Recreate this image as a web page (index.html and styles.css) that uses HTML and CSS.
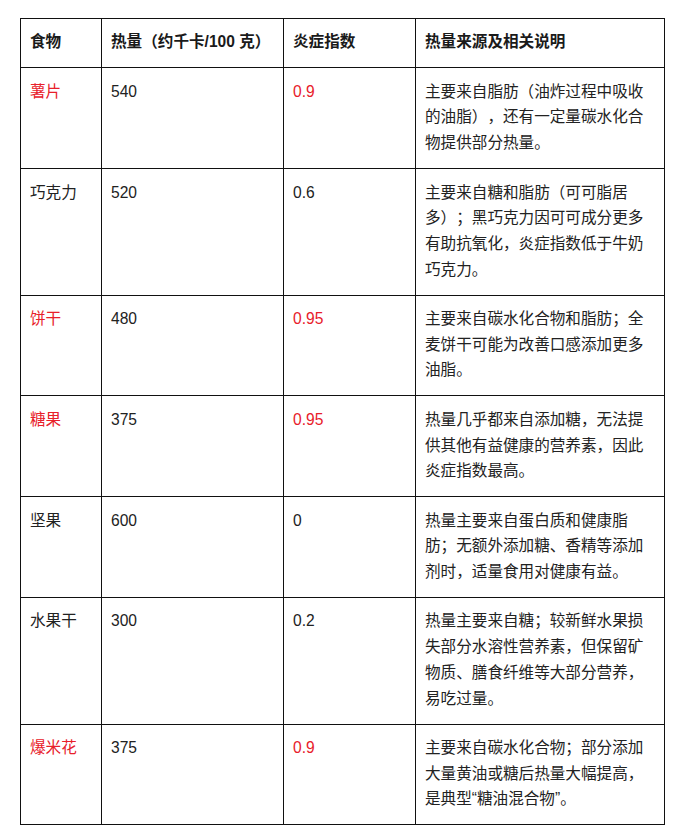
FILE: index.html
```html
<!DOCTYPE html>
<html lang="zh-CN">
<head>
<meta charset="utf-8">
<link rel="stylesheet" href="styles.css">
</head>
<body>
<div class="page">
<table class="food">
<colgroup><col class="c1"><col class="c2"><col class="c3"><col class="c4"></colgroup>
<thead>
<tr><th>食物</th><th>热量（约千卡/100 克）</th><th>炎症指数</th><th>热量来源及相关说明</th></tr>
</thead>
<tbody>
<tr><td class="red">薯片</td><td>540</td><td class="red">0.9</td><td>主要来自脂肪（油炸过程中吸收的油脂），还有一定量碳水化合物提供部分热量。</td></tr>
<tr><td>巧克力</td><td>520</td><td>0.6</td><td>主要来自糖和脂肪（可可脂居多）；黑巧克力因可可成分更多有助抗氧化，炎症指数低于牛奶巧克力。</td></tr>
<tr><td class="red">饼干</td><td>480</td><td class="red">0.95</td><td>主要来自碳水化合物和脂肪；全麦饼干可能为改善口感添加更多油脂。</td></tr>
<tr><td class="red">糖果</td><td>375</td><td class="red">0.95</td><td>热量几乎都来自添加糖，无法提供其他有益健康的营养素，因此炎症指数最高。</td></tr>
<tr><td>坚果</td><td>600</td><td>0</td><td>热量主要来自蛋白质和健康脂肪；无额外添加糖、香精等添加剂时，适量食用对健康有益。</td></tr>
<tr><td>水果干</td><td>300</td><td>0.2</td><td>热量主要来自糖；较新鲜水果损失部分水溶性营养素，但保留矿物质、膳食纤维等大部分营养，易吃过量。</td></tr>
<tr><td class="red">爆米花</td><td>375</td><td class="red">0.9</td><td>主要来自碳水化合物；部分添加大量黄油或糖后热量大幅提高，是典型“糖油混合物”。</td></tr>
</tbody>
</table>
</div>
</body>
</html>
```
FILE: styles.css
```css
html, body {
  margin: 0;
  padding: 0;
  background: #ffffff;
}
.page {
  padding: 18px 0 0 20px;
}
.food {
  border-collapse: collapse;
  table-layout: fixed;
  width: 644px;
  font-family: "Liberation Sans", "Noto Sans CJK SC", sans-serif;
  font-size: 15.6px;
  line-height: 25.7px;
  color: #222222;
  text-spacing-trim: space-all;
}
.c1 { width: 81px; }
.c2 { width: 182px; }
.c3 { width: 132px; }
.c4 { width: 249px; }
.food th,
.food td {
  border: 1px solid #111111;
  padding: 10.4px 10px 12.3px 9px;
  text-align: left;
  vertical-align: top;
}
.food th {
  font-weight: bold;
  color: #1a1a1a;
}
.food .red {
  color: #e8202a;
}
```
